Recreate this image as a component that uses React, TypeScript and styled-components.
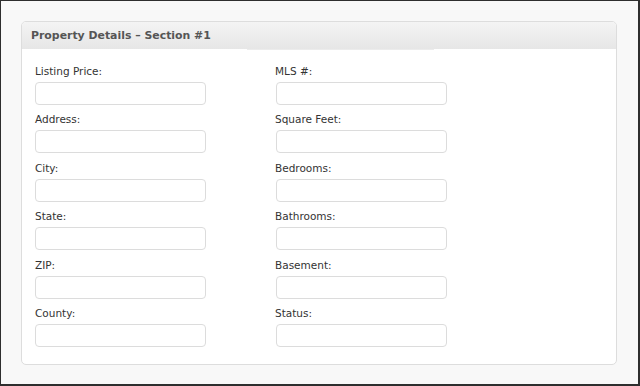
import React from 'react';
import styled, { createGlobalStyle } from 'styled-components';

const GlobalStyle = createGlobalStyle`
  * {
    box-sizing: border-box;
  }
  body {
    margin: 0;
    font-family: 'DejaVu Sans', Verdana, sans-serif;
  }
`;

const Frame = styled.div`
  width: 640px;
  height: 386px;
  border-style: solid;
  border-color: #2e2e2e;
  border-width: 1px 2px 2px 1px;
  background: #f8f8f8;
  padding: 20px 0 0 20px;
`;

const Panel = styled.section`
  width: 596px;
  height: 344px;
  background: #ffffff;
  border: 1px solid #dddddd;
  border-radius: 5px;
  overflow: hidden;
`;

const Header = styled.header`
  height: 27px;
  padding-left: 9px;
  background: linear-gradient(to bottom, #f4f4f4, #e6e6e6);
  font-size: 10.9px;
  font-weight: bold;
  line-height: 27px;
  color: #555555;
`;

// faint leftover rule under the header
const Divider = styled.div`
  width: 187px;
  height: 1px;
  margin-left: 225px;
  background: #ececec;
`;

const Body = styled.div`
  padding: 14px 0 0 13px;
  display: grid;
  grid-template-columns: 241px 241px;
  row-gap: 7.4px;
`;

const Field = styled.div`
  display: flex;
  flex-direction: column;
`;

const Label = styled.label<{ $shift?: number }>`
  display: block;
  height: 15px;
  margin: 0 0 3px ${({ $shift }) => $shift ?? 0}px;
  font-size: 10.5px;
  line-height: 15px;
  color: #333333;
`;

const Input = styled.input`
  width: 171px;
  height: 23px;
  margin: 0;
  padding: 0 6px;
  border: 1px solid #dcdcdc;
  border-radius: 4px;
  background: #ffffff;
  font-family: inherit;
  font-size: 11px;
  outline: none;
`;

const rows: [string, string][] = [
  ['Listing Price:', 'MLS #:'],
  ['Address:', 'Square Feet:'],
  ['City:', 'Bedrooms:'],
  ['State:', 'Bathrooms:'],
  ['ZIP:', 'Basement:'],
  ['County:', 'Status:'],
];

export default function App() {
  return (
    <>
      <GlobalStyle />
      <Frame>
        <Panel>
          <Header>Property Details – Section #1</Header>
          <Divider />
          <Body>
            {rows.map(([left, right]) => (
              <React.Fragment key={left}>
                <Field>
                  <Label>{left}</Label>
                  <Input type="text" />
                </Field>
                <Field>
                  <Label $shift={-1}>{right}</Label>
                  <Input type="text" />
                </Field>
              </React.Fragment>
            ))}
          </Body>
        </Panel>
      </Frame>
    </>
  );
}
